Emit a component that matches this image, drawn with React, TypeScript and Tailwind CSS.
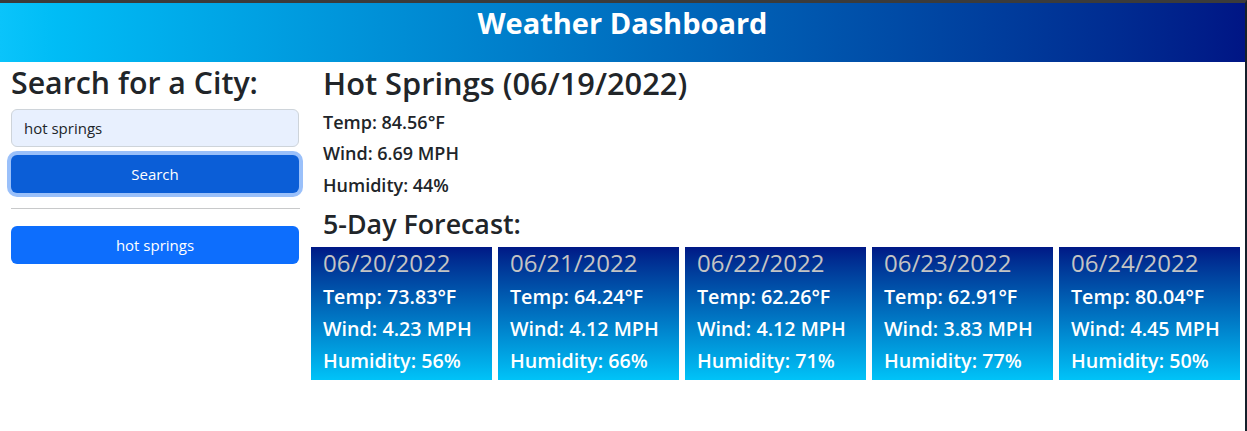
const forecast = [
  { date: '06/20/2022', temp: '73.83', wind: '4.23', humidity: '56' },
  { date: '06/21/2022', temp: '64.24', wind: '4.12', humidity: '66' },
  { date: '06/22/2022', temp: '62.26', wind: '4.12', humidity: '71' },
  { date: '06/23/2022', temp: '62.91', wind: '3.83', humidity: '77' },
  { date: '06/24/2022', temp: '80.04', wind: '4.45', humidity: '50' },
];

function ForecastCard({ date, temp, wind, humidity }: (typeof forecast)[number]) {
  return (
    <div className="w-[181px] h-[133px] px-3 bg-gradient-to-b from-[#001886] to-[#00c3f8]">
      <h5 className="h-8 leading-8 text-[24px] font-medium text-[#c4c4c4]">{date}</h5>
      <div className="mt-0.5 text-white font-semibold text-[19.7px]">
        <p className="leading-8">Temp: {temp}°F</p>
        <p className="leading-8">Wind: {wind} MPH</p>
        <p className="leading-8">Humidity: {humidity}%</p>
      </div>
    </div>
  );
}

export default function App() {
  return (
    <div
      className="min-h-screen w-[1247px] bg-white border-t-[3px] border-t-[#3b3b3b] border-r-2 border-r-[#14202b] text-[#212529]"
      style={{ fontFamily: '"Open Sans", "Noto Sans", sans-serif' }}
    >
      <header className="h-[59px] flex justify-center pt-[5px] bg-gradient-to-r from-[#0ac4fb] to-[#001585]">
        <h1 className="text-white font-bold text-[29px] leading-[29px]">Weather Dashboard</h1>
      </header>

      <div className="flex">
        <aside className="w-[311px] px-[11px] pt-0.5">
          <h2 className="h-[38px] leading-[38px] text-[30.3px] font-semibold">Search for a City:</h2>
          <input
            readOnly
            value="hot springs"
            className="mt-[7px] w-[288px] h-[38px] px-3 rounded-md border border-[#ced4da] bg-[#e8f0fe] text-[15px] text-[#212529] outline-none"
          />
          <button className="mt-2 w-[288px] h-[38px] rounded-md bg-[#0b5ed7] text-white text-[15px] ring-4 ring-[#9ac0fa]">
            Search
          </button>
          <hr className="mt-[15px] border-0 border-t border-[#c8c9ca]" />
          <button className="mt-[17px] w-[288px] h-[38px] rounded-md bg-[#0d6efd] text-white text-[15px]">
            hot springs
          </button>
        </aside>

        <main className="flex-1 pt-0.5">
          <div className="pl-3">
            <h2 className="h-[38px] leading-[38px] text-[30.8px] font-semibold">Hot Springs (06/19/2022)</h2>
            <div className="mt-[4.5px] text-[18px] font-semibold">
              <p className="leading-[31.5px]">Temp: 84.56°F</p>
              <p className="leading-[31.5px]">Wind: 6.69 MPH</p>
              <p className="leading-[31.5px]">Humidity: 44%</p>
            </div>
            <h3 className="mt-[5.5px] h-[34px] leading-[34px] text-[26.8px] font-semibold">5-Day Forecast:</h3>
          </div>
          <div className="mt-[6.5px] flex gap-[6px]">
            {forecast.map((day) => (
              <ForecastCard key={day.date} {...day} />
            ))}
          </div>
        </main>
      </div>
    </div>
  );
}
